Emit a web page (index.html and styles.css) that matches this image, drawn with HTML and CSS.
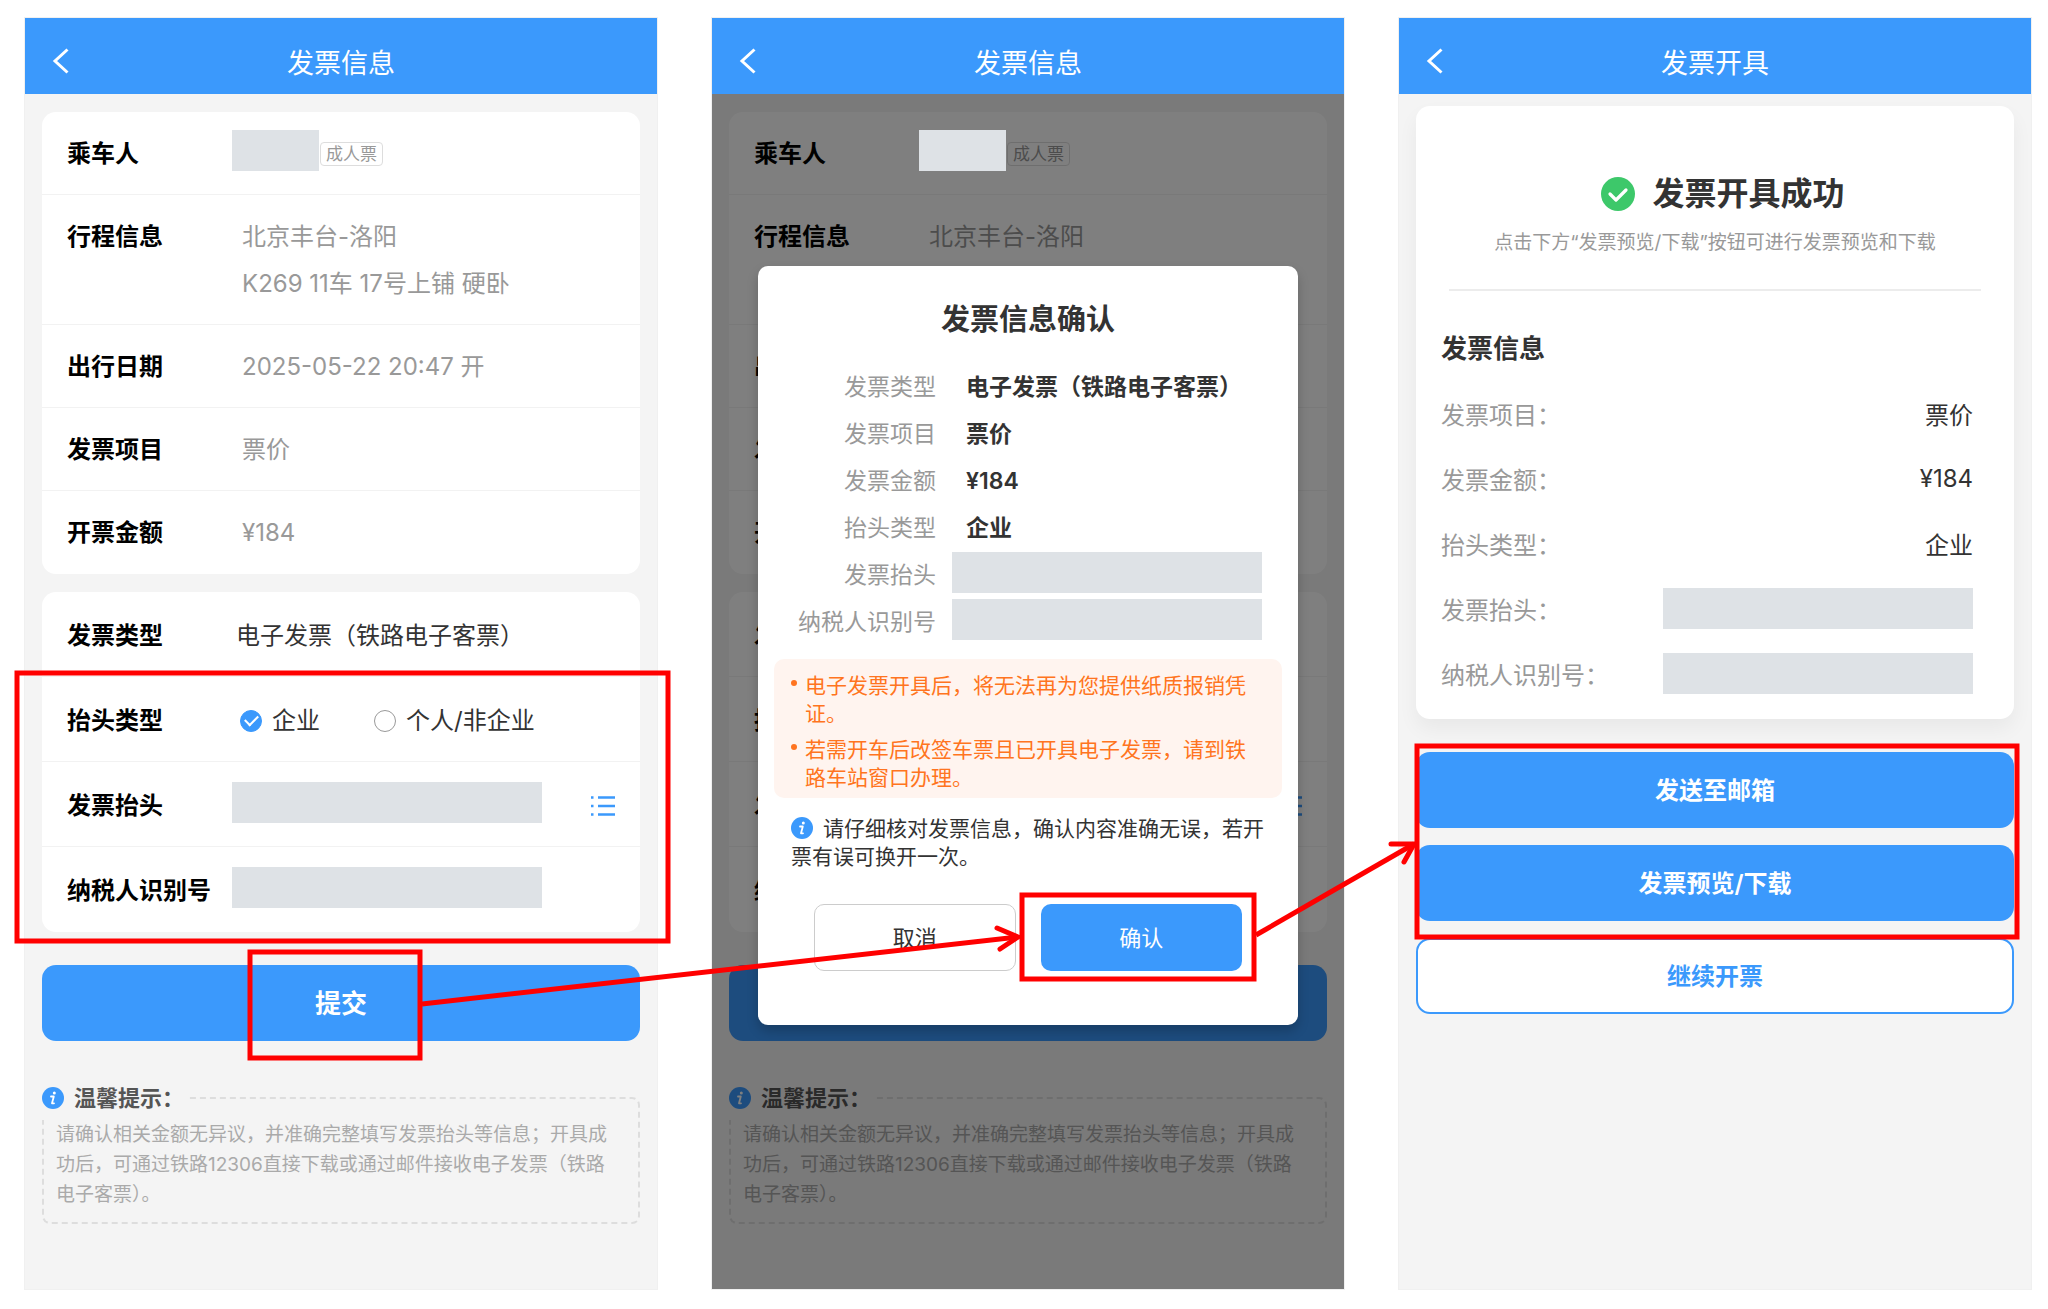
FILE: index.html
```html
<!DOCTYPE html>
<html lang="zh-CN">
<head>
    <meta charset="UTF-8">
    <meta name="viewport" content="width=device-width, initial-scale=1.0">
    <title>电子发票开具流程</title>
    <link rel="stylesheet" href="styles.css">
</head>
<body>
    <svg class="sprite" aria-hidden="true">
        <symbol id="icon-back" viewBox="0 0 18 26">
            <path d="M15.500 1.500L3 13l12.500 11.500" fill="none" stroke="#fff" stroke-width="3"/>
        </symbol>
        <symbol id="icon-info" viewBox="0 0 22 22">
            <circle cx="11" cy="11" r="11" fill="#3b99fc"/>
            <circle cx="12.300" cy="6" r="1.500" fill="#fff"/>
            <path d="M9 9.500h2.800L10 16.300h2" fill="none" stroke="#fff" stroke-width="1.800" stroke-linecap="round" stroke-linejoin="round"/>
        </symbol>
        <symbol id="icon-list" viewBox="0 0 24 20">
            <path d="M0 1.500h2.500M0 10h2.500M0 18.500h2.500M7 1.500h17M7 10h17M7 18.500h17" stroke="#3b99fc" stroke-width="2.400"/>
        </symbol>
    </svg>

    <main class="page">
        <!-- Step 1: fill in the form -->
        <section class="screen">
            <header class="navbar">
                <button class="back" aria-label="返回"><svg><use href="#icon-back"/></svg></button>
                <h1>发票信息</h1>
            </header>
            <div class="content">
                <div class="card">
                    <div class="row"><span class="name">乘车人</span><span class="mask mask-short"></span><span class="tag">成人票</span></div>
                    <div class="row"><span class="name">行程信息</span><span class="value">北京丰台-洛阳<br>K269 11车 17号上铺 硬卧</span></div>
                    <div class="row"><span class="name">出行日期</span><span class="value">2025-05-22 20:47 开</span></div>
                    <div class="row"><span class="name">发票项目</span><span class="value">票价</span></div>
                    <div class="row"><span class="name">开票金额</span><span class="value">¥184</span></div>
                </div>
                <form class="card card-form" id="form1">
                    <div class="row"><span class="name">发票类型</span><span class="value">电子发票（铁路电子客票）</span></div>
                    <div class="row">
                        <span class="name">抬头类型</span>
                        <div class="radios">
                            <label><input type="radio" name="type1" checked>企业</label>
                            <label><input type="radio" name="type1">个人/非企业</label>
                        </div>
                    </div>
                    <div class="row">
                        <label class="name" for="title1">发票抬头</label>
                        <input class="mask" id="title1" type="text">
                        <button class="list-btn" type="button" aria-label="选择抬头"><svg><use href="#icon-list"/></svg></button>
                    </div>
                    <div class="row"><label class="name" for="tax1">纳税人识别号</label><input class="mask" id="tax1" type="text"></div>
                </form>
                <button class="btn btn-submit" form="form1">提交</button>
                <div class="tips">
                    <h2 class="tips-title"><svg class="info"><use href="#icon-info"/></svg>温馨提示：</h2>
                    <p>请确认相关金额无异议，并准确完整填写发票抬头等信息；开具成功后，可通过铁路12306直接下载或通过邮件接收电子发票（铁路电子客票）。</p>
                </div>
            </div>
        </section>

        <!-- Step 2: confirm dialog -->
        <section class="screen">
            <header class="navbar">
                <button class="back" aria-label="返回"><svg><use href="#icon-back"/></svg></button>
                <h1>发票信息</h1>
            </header>
            <div class="content">
                <div class="card">
                    <div class="row"><span class="name">乘车人</span><span class="mask mask-short mask-top"></span><span class="tag">成人票</span></div>
                    <div class="row"><span class="name">行程信息</span><span class="value">北京丰台-洛阳<br>K269 11车 17号上铺 硬卧</span></div>
                    <div class="row"><span class="name">出行日期</span><span class="value">2025-05-22 20:47 开</span></div>
                    <div class="row"><span class="name">发票项目</span><span class="value">票价</span></div>
                    <div class="row"><span class="name">开票金额</span><span class="value">¥184</span></div>
                </div>
                <form class="card card-form" id="form2">
                    <div class="row"><span class="name">发票类型</span><span class="value">电子发票（铁路电子客票）</span></div>
                    <div class="row">
                        <span class="name">抬头类型</span>
                        <div class="radios">
                            <label><input type="radio" name="type2" checked>企业</label>
                            <label><input type="radio" name="type2">个人/非企业</label>
                        </div>
                    </div>
                    <div class="row">
                        <label class="name" for="title2">发票抬头</label>
                        <input class="mask" id="title2" type="text">
                        <button class="list-btn" type="button" aria-label="选择抬头"><svg><use href="#icon-list"/></svg></button>
                    </div>
                    <div class="row"><label class="name" for="tax2">纳税人识别号</label><input class="mask" id="tax2" type="text"></div>
                </form>
                <button class="btn btn-submit" form="form2">提交</button>
                <div class="tips">
                    <h2 class="tips-title"><svg class="info"><use href="#icon-info"/></svg>温馨提示：</h2>
                    <p>请确认相关金额无异议，并准确完整填写发票抬头等信息；开具成功后，可通过铁路12306直接下载或通过邮件接收电子发票（铁路电子客票）。</p>
                </div>

                <div class="overlay">
                    <div class="dialog" role="dialog" aria-labelledby="dialogTitle">
                        <h2 id="dialogTitle">发票信息确认</h2>
                        <dl class="details">
                            <dt>发票类型</dt><dd>电子发票（铁路电子客票）</dd>
                            <dt>发票项目</dt><dd>票价</dd>
                            <dt>发票金额</dt><dd>¥184</dd>
                            <dt>抬头类型</dt><dd>企业</dd>
                            <dt>发票抬头</dt><dd class="mask"></dd>
                            <dt>纳税人识别号</dt><dd class="mask"></dd>
                        </dl>
                        <ul class="warning">
                            <li>电子发票开具后，将无法再为您提供纸质报销凭证。</li>
                            <li>若需开车后改签车票且已开具电子发票，请到铁路车站窗口办理。</li>
                        </ul>
                        <p class="note"><svg class="info"><use href="#icon-info"/></svg>请仔细核对发票信息，确认内容准确无误，若开票有误可换开一次。</p>
                        <div class="dialog-actions">
                            <button class="btn-cancel">取消</button>
                            <button class="btn-confirm">确认</button>
                        </div>
                    </div>
                </div>
            </div>
        </section>

        <!-- Step 3: result -->
        <section class="screen">
            <header class="navbar">
                <button class="back" aria-label="返回"><svg><use href="#icon-back"/></svg></button>
                <h1>发票开具</h1>
            </header>
            <div class="content content-result">
                <div class="card card-result">
                    <div class="success">
                        <h2>
                            <svg class="success-icon" viewBox="0 0 34 34">
                                <circle cx="17" cy="17" r="17" fill="#3dc86a"/>
                                <path d="M9 17l6 6 10-10" fill="none" stroke="#fff" stroke-width="3.200" stroke-linecap="round" stroke-linejoin="round"/>
                            </svg>发票开具成功
                        </h2>
                        <p>点击下方“发票预览/下载”按钮可进行发票预览和下载</p>
                    </div>
                    <h3>发票信息</h3>
                    <dl class="result">
                        <div><dt>发票项目：</dt><dd>票价</dd></div>
                        <div><dt>发票金额：</dt><dd>¥184</dd></div>
                        <div><dt>抬头类型：</dt><dd>企业</dd></div>
                        <div><dt>发票抬头：</dt><dd class="mask"></dd></div>
                        <div><dt>纳税人识别号：</dt><dd class="mask"></dd></div>
                    </dl>
                </div>
                <div class="actions">
                    <button class="btn">发送至邮箱</button>
                    <button class="btn">发票预览/下载</button>
                    <button class="btn btn-outline">继续开票</button>
                </div>
            </div>
        </section>

        <!-- Red guide marks over the three screens -->
        <svg class="marks" viewBox="0 0 2048 1309" preserveAspectRatio="none" aria-hidden="true">
            <rect x="17" y="673" width="651" height="268"/>
            <rect x="250" y="952" width="170" height="106"/>
            <rect x="1022" y="895" width="232" height="84"/>
            <rect x="1417" y="746" width="600" height="191"/>
            <path d="M422 1004L1018 937"/>
            <path d="M997 928L1018 937L1000 949" stroke-linecap="round"/>
            <path d="M1256 935L1414 844"/>
            <path d="M1391 844H1414L1404 862" stroke-linecap="round"/>
        </svg>
    </main>
</body>
</html>
```

FILE: styles.css
```css
* {
    box-sizing: border-box;
    margin: 0;
    padding: 0;
}
body {
    background: #fff;
    color: #333;
    font-family: Inter, "Noto Sans CJK SC", sans-serif;
    font-size: 24px;
}
button, input {
    font-family: inherit;
    border: none;
}
button {
    cursor: pointer;
}
.sprite {
    display: none;
}

/* Page and screens */
.page {
    position: relative;
    display: grid;
    grid-template-columns: repeat(3, 1fr);
    gap: 55px;
    min-height: 100vh;
    padding: 18px 17px 20px 25px;
}
.screen {
    display: flex;
    flex-direction: column;
    background: #f4f4f4;
    box-shadow: 0 0 0 1px #f0f0f0;
}
.navbar {
    display: grid;
    grid-template-columns: 72px 1fr 72px;
    align-items: center;
    height: 76px;
    padding-top: 10px;
    background: #3b99fc;
    color: #fff;
}
.navbar h1 {
    font-size: 27px;
    font-weight: 400;
    text-align: center;
}
.back {
    height: 26px;
    padding-left: 27px;
    background: none;
    text-align: left;
}
.back svg {
    display: block;
    width: 18px;
    height: 26px;
}
.content {
    position: relative;
    flex: 1;
    padding: 18px 17px;
}

/* Cards */
.card {
    margin-bottom: 18px;
    border-radius: 14px;
    background: #fff;
}
.row {
    display: flex;
    align-items: flex-start;
    padding: 18px 25px 17px;
    border-bottom: 1px solid #f2f2f2;
    line-height: 47px;
}
.row:last-child {
    border-bottom-color: transparent;
}
.name {
    width: 165px;
    color: #000;
    font-weight: 600;
    white-space: nowrap;
}
.value {
    padding-left: 10px;
    color: #999;
}
.card-form .row {
    padding: 20px 25px 17px;
}
.card-form .value {
    padding-left: 4px;
    color: #333;
}
.mask {
    width: 310px;
    height: 41px;
    background: #dee2e6;
}
.mask-short {
    width: 87px;
}
.mask-top {
    position: relative;
    z-index: 2;
}
.tag {
    align-self: center;
    height: 24px;
    margin-left: 1px;
    padding: 0 5px;
    border: 1px solid #ddd;
    border-radius: 4px;
    color: #999;
    font-size: 17px;
    line-height: 22px;
}
.radios {
    display: flex;
    gap: 54px;
    padding-left: 8px;
}
.radios label {
    display: flex;
    align-items: center;
    gap: 10px;
}
.radios input {
    display: grid;
    place-items: center;
    width: 22px;
    height: 22px;
    border: 1px solid #999;
    border-radius: 50%;
    appearance: none;
}
.radios input:checked {
    border-color: #3b99fc;
    background: #3b99fc;
}
.radios input:checked::after {
    content: "";
    width: 11px;
    height: 6px;
    margin-bottom: 3px;
    border: solid #fff;
    border-width: 0 0 2px 2px;
    transform: rotate(-45deg);
}
.list-btn {
    align-self: center;
    margin-left: auto;
    background: none;
}
.list-btn svg {
    display: block;
    width: 24px;
    height: 20px;
}

/* Buttons */
.btn {
    display: block;
    width: 100%;
    height: 76px;
    padding-bottom: 3px;
    border-radius: 14px;
    background: #3b99fc;
    color: #fff;
    font-size: 24px;
    font-weight: 600;
}
.btn-submit {
    margin-top: 33px;
    font-size: 26px;
}
.btn-outline {
    border: 2px solid #3b99fc;
    background: #fff;
    color: #3b99fc;
}

/* Tips */
.info {
    width: 22px;
    height: 22px;
}
.tips {
    margin-top: 56px;
    padding: 0 20px 12px 12px;
    border: 2px dashed #ddd;
    border-radius: 8px;
    color: #aaa;
    font-size: 19px;
    line-height: 30px;
}
.tips-title {
    display: flex;
    align-items: center;
    gap: 10px;
    width: 145px;
    height: 44px;
    margin: -23px 0 0 -14px;
    background: #f4f4f4;
    color: #555;
    font-size: 22px;
    font-weight: 600;
    white-space: nowrap;
}

/* Confirm dialog */
.overlay {
    position: absolute;
    inset: 0;
    z-index: 1;
    padding: 172px 46px 0;
    background: rgba(0, 0, 0, 0.5);
}
.dialog {
    padding: 34px 16px 54px;
    border-radius: 10px;
    background: #fff;
    box-shadow: 0 6px 12px rgba(0, 0, 0, 0.2);
}
.dialog h2 {
    margin-bottom: 24px;
    font-size: 29px;
    font-weight: 600;
    line-height: 40px;
    text-align: center;
}
.details {
    display: grid;
    grid-template-columns: 162px 1fr;
    column-gap: 16px;
    margin-bottom: 13px;
    font-size: 23px;
    line-height: 47px;
}
.details dt {
    color: #999;
    text-align: right;
}
.details dd {
    padding-left: 14px;
    font-weight: 600;
}
.warning {
    padding: 13px 24px 6px 31px;
    border-radius: 10px;
    background: #fff4ef;
    color: #ff7420;
    font-size: 21px;
    line-height: 28px;
    list-style: none;
}
.warning li {
    position: relative;
}
.warning li + li {
    margin-top: 8px;
}
.warning li::before {
    content: "";
    position: absolute;
    top: 8px;
    left: -14px;
    width: 6px;
    height: 6px;
    border-radius: 50%;
    background: #ff7420;
}
.note {
    padding: 17px 16px 0 17px;
    font-size: 21px;
    line-height: 28px;
}
.note .info {
    margin-right: 10px;
    vertical-align: -3px;
}
.dialog-actions {
    display: grid;
    grid-template-columns: 1fr 1fr;
    gap: 25px;
    padding: 33px 40px 0;
}
.dialog-actions button {
    height: 67px;
    padding-bottom: 3px;
    border-radius: 10px;
    font-size: 22px;
}
.btn-cancel {
    border: 1px solid #ccc;
    background: #fff;
    color: #333;
}
.btn-confirm {
    background: #3b99fc;
    color: #fff;
}

/* Result screen */
.content-result {
    padding-top: 12px;
}
.card-result {
    margin-bottom: 33px;
    padding-bottom: 13px;
    box-shadow: 0 10px 20px rgba(0, 0, 0, 0.05);
}
.success {
    margin: 0 33px;
    padding: 64px 0 31px;
    border-bottom: 2px solid #ececec;
    text-align: center;
}
.success h2 {
    display: flex;
    justify-content: center;
    align-items: center;
    gap: 17px;
    margin-bottom: 10px;
    padding-left: 16px;
    font-size: 32px;
    font-weight: 600;
    line-height: 48px;
}
.success-icon {
    width: 34px;
    height: 34px;
}
.success p {
    color: #999;
    font-size: 19px;
    line-height: 30px;
}
.card-result h3 {
    padding: 35px 25px 9px;
    font-size: 26px;
    font-weight: 600;
    line-height: 46px;
}
.result {
    padding: 0 41px 0 25px;
}
.result > div {
    display: flex;
    justify-content: space-between;
    align-items: center;
    height: 65px;
}
.result dt {
    color: #999;
}
.actions {
    display: grid;
    gap: 17px;
}

/* Guide marks */
.marks {
    position: absolute;
    inset: 0;
    z-index: 3;
    width: 100%;
    height: 100%;
    fill: none;
    stroke: #f00;
    stroke-width: 5;
    pointer-events: none;
}
```
